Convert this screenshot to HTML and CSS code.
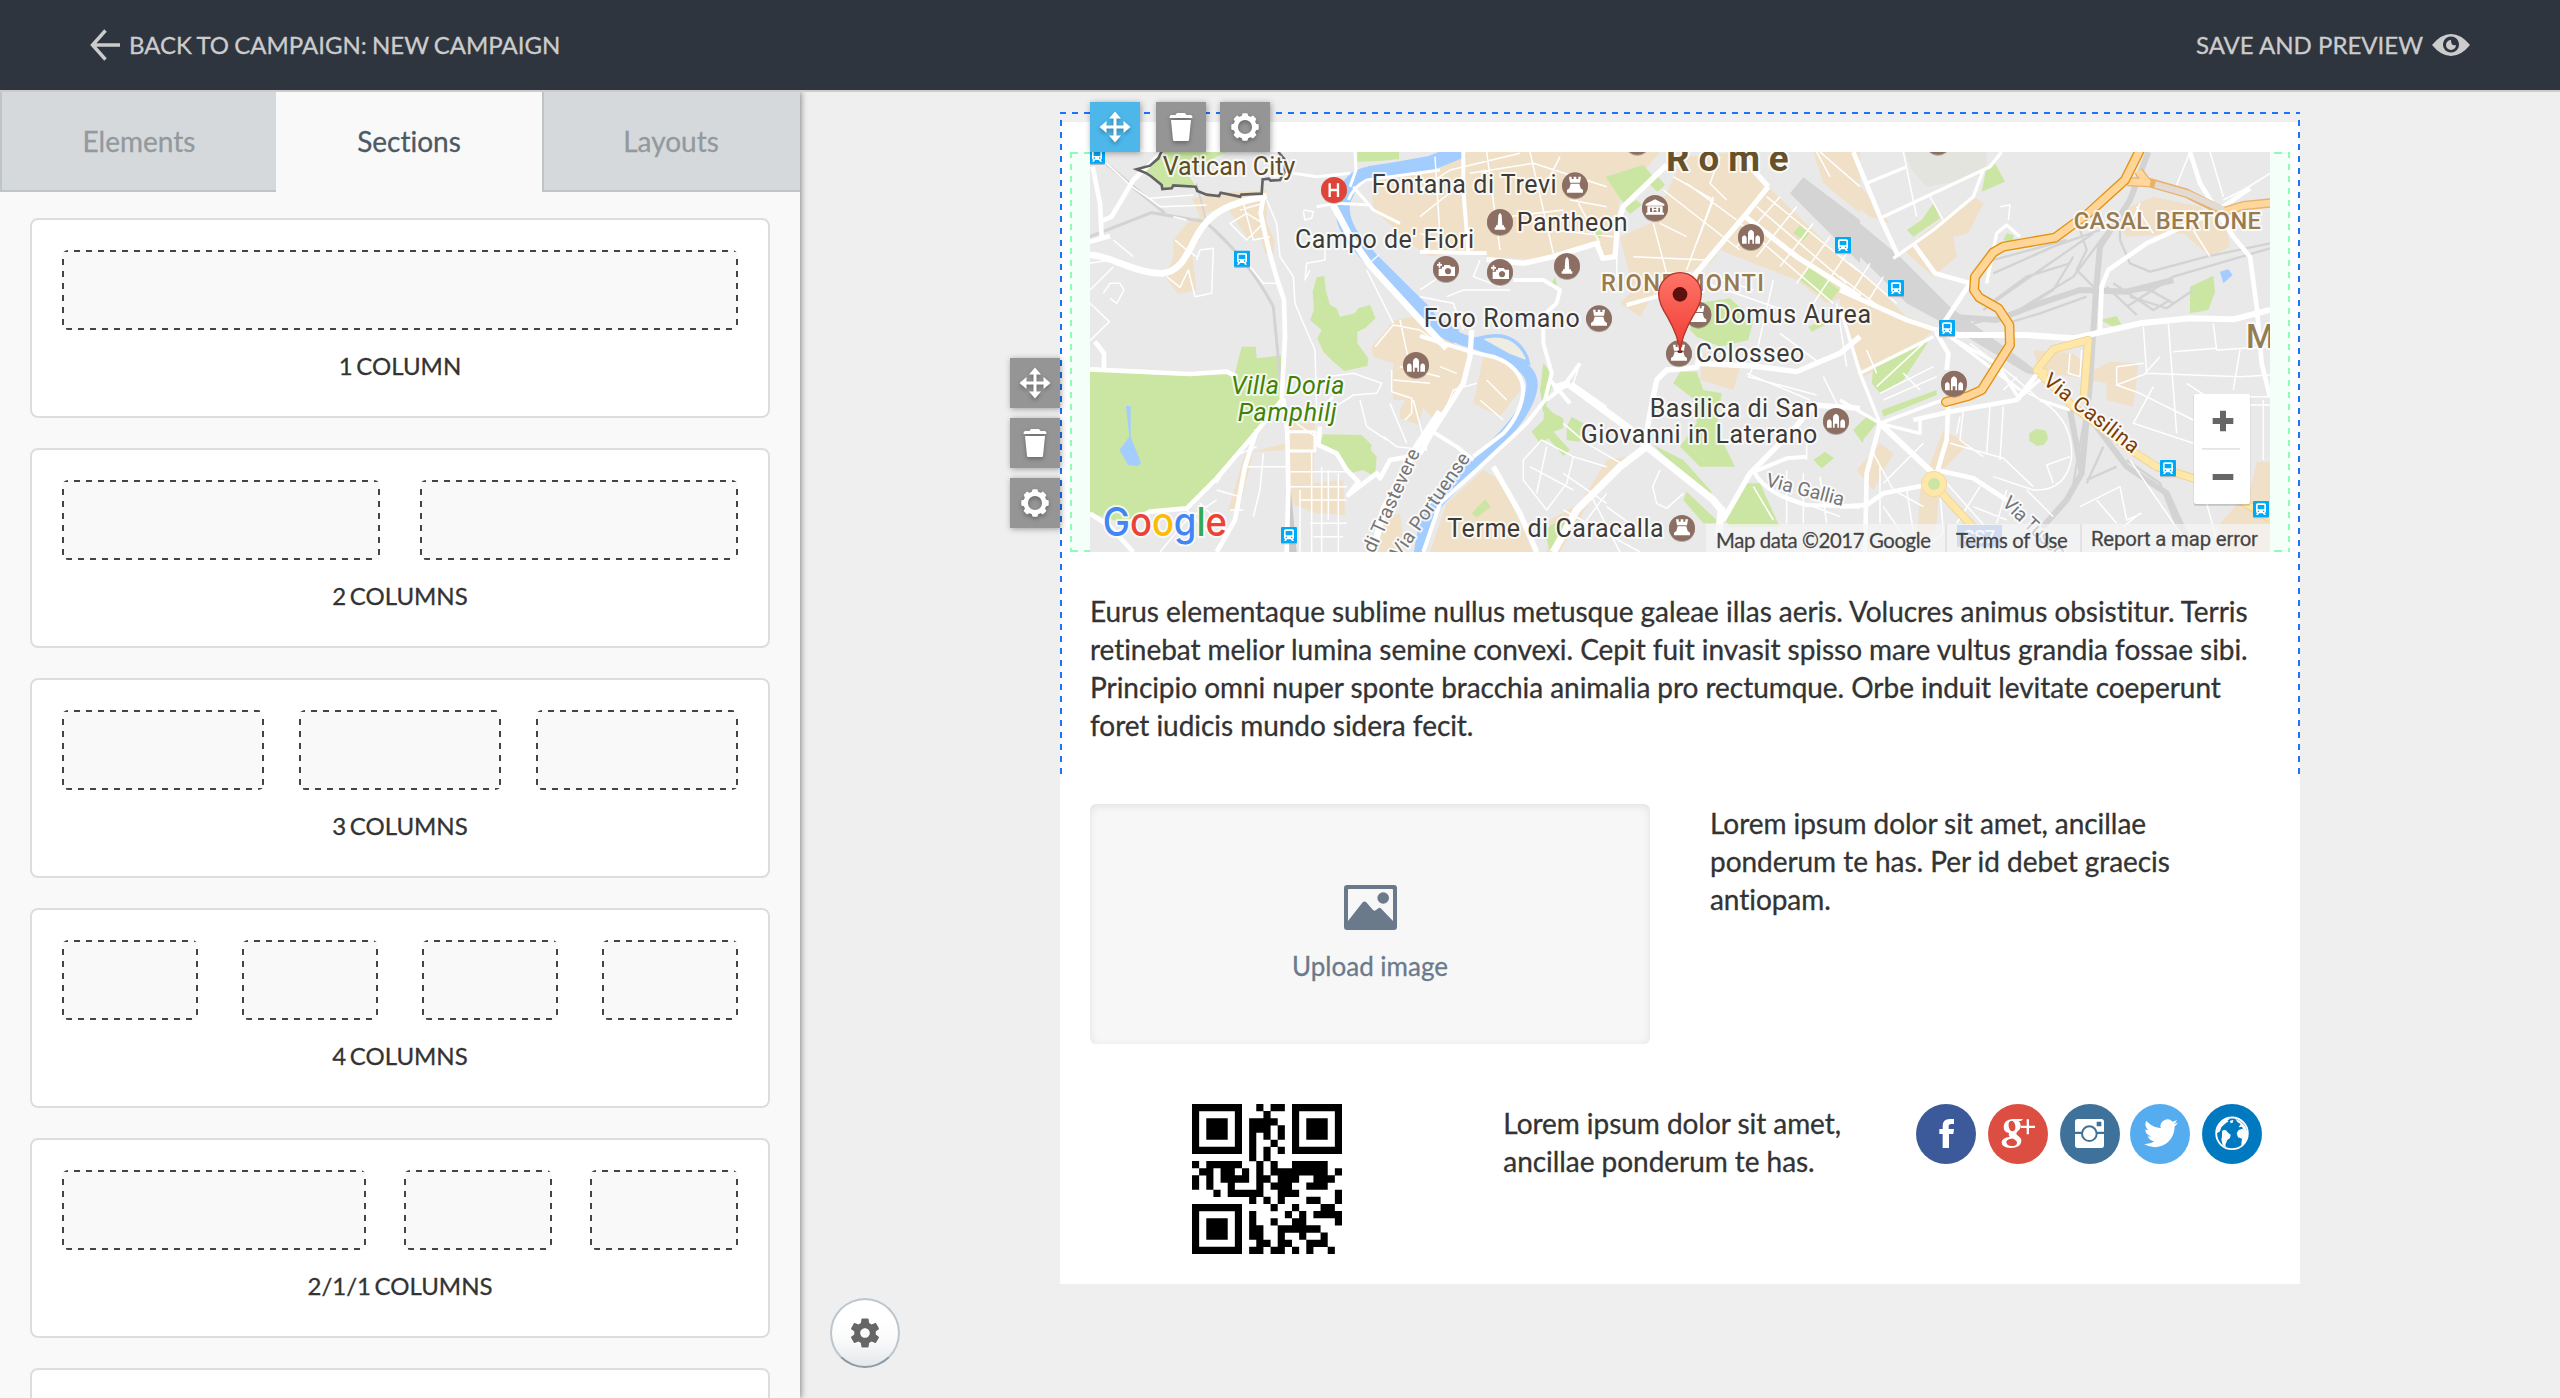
FILE: index.html
```html
<!DOCTYPE html>
<html lang="en">
<head>
<meta charset="utf-8">
<title>Campaign editor</title>
<link rel="stylesheet" href="styles.css">
</head>
<body>
<svg class="defs" width="0" height="0" aria-hidden="true">
  <defs>
    <symbol id="i-move" viewBox="0 0 32 32"><path d="M16 .5l6 7h-4.500v7h7V10l7 6-7 6v-4.500h-7v7H22l-6 7-6-7h4.500v-7h-7V22l-7-6 7-6v4.500h7v-7H10z"/></symbol>
    <symbol id="i-trash" viewBox="0 0 24 28"><path d="M8 0h8l1.500 2H22q1.500.5 1.500 3H.5Q.5 2.500 2 2h4.500zM2 7h20l-2 20q-.1 1-1.200 1H5.200Q4.100 28 4 27z"/></symbol>
    <symbol id="i-cog" viewBox="-14 -14 28 28">
      <circle r="9.300" fill="none" stroke="currentColor" stroke-width="4.400"/>
      <path d="M-3.400-10.500l1-3.200h4.800l1 3.200zM-3.400 10.500l1 3.200h4.800l1-3.200zM-10.500-3.400l-3.200 1v4.800l3.200 1zM10.500-3.400l3.200 1v4.800l-3.200 1z"/>
      <path transform="rotate(45)" d="M-3.400-10.500l1-3.200h4.800l1 3.200zM-3.400 10.500l1 3.200h4.800l1-3.200zM-10.500-3.400l-3.200 1v4.800l3.200 1zM10.500-3.400l3.200 1v4.800l-3.200 1z"/>
    </symbol>
    <symbol id="m-bus" viewBox="-24 -26 48 54" overflow="visible"><rect x="-24" y="-20" width="48" height="48" rx="3" fill="#8e9aa3" opacity=".6"/><rect x="-24" y="-24" width="48" height="48" rx="3" fill="#00a9f8"/><path fill="#fff" fill-rule="evenodd" d="M-10-17h20q5 0 5 5V8q0 4-4 4l4 6H9l-3-5H-6l-3 5h-6l4-6q-4 0-4-4v-20q0-5 5-5zm0 5V1h20v-13zM-10 5v4h4V5zM6 5v4h4V5z"/></symbol>
    <g id="m-poi"><circle cy="3" r="39" fill="#776a62" opacity=".5"/><circle r="39" fill="#8d6e63"/></g>
    <g id="m-tower"><use href="#m-poi"/><path fill="#fff" d="M-18-26h8v7h6v-7h8v7h6v-7h8l-3 18h-30zM-13-5h26l4 14 7 5v8h-48v-8l7-5z"/></g>
    <g id="m-obelisk"><use href="#m-poi"/><path fill="#fff" d="M0-28l5 8 2 30h5v6h4v7h-32v-7h4v-6h5l2-30z"/></g>
    <g id="m-camera"><use href="#m-poi"/><path fill="#fff" fill-rule="evenodd" d="M-22-20h5v5h5v5h-5v6h-5v-6h-5v-5h5zM-6-12h17l4 5h12v28h-49V-1h10v-6h6zM6-3a9.500 9.500 0 1 0 .1 0z"/></g>
    <g id="m-museum"><use href="#m-poi"/><path fill="#fff" fill-rule="evenodd" d="M0-26l28 14v5h-56v-5zM-23-5h46v19h4v6h-54v-6h4zm8 4v13h30V-1zM-9-1h5v4h8v-4h6v12H4V7h-8v4h-5z"/></g>
    <g id="m-ruin"><use href="#m-poi"/><path fill="#fff" d="M0-22q9 3 9 12v30H4V8h-8v12h-5v-30q0-9 9-12zM-20-5q7 2 7 8v17h-14V3q0-6 7-8zM20-5q7 2 7 8v17H13V3q0-6 7-8z"/></g>
    <linearGradient id="pinfill" x1="0" y1="0" x2="0" y2="1"><stop offset="0" stop-color="#ff7468"/><stop offset="1" stop-color="#ef3b32"/></linearGradient>
  </defs>
</svg>

<header class="topbar">
  <a class="topbar-link">
    <svg width="30" height="32" viewBox="0 0 30 32" fill="none" stroke="currentColor" stroke-width="3.400"><path d="M15.500 1.500L2.500 16l13 14.500M2 16h28"/></svg>
    <span>BACK TO CAMPAIGN: NEW CAMPAIGN</span>
  </a>
  <a class="topbar-link save">
    <span>SAVE AND PREVIEW</span>
    <svg width="38" height="24" viewBox="0 0 38 24"><path fill="currentColor" fill-rule="evenodd" d="M0 12Q9 1 19 1t19 11q-9 11-19 11T0 12zM19 3.500a8 8 0 1 0 .01 0z"/><path fill="currentColor" d="M19 7a5 5 0 1 0 5 5q-5 1.500-5-5z"/></svg>
  </a>
</header>

<div class="workspace">
  <aside class="sidebar">
    <nav class="tabs">
      <a class="tab tab-elements">Elements</a>
      <a class="tab tab-sections active">Sections</a>
      <a class="tab tab-layouts">Layouts</a>
    </nav>
    <div class="cards">
      <section class="card"><div class="slots"><i class="slot w1"></i></div><p>1 COLUMN</p></section>
      <section class="card"><div class="slots"><i class="slot w2"></i><i class="slot w2"></i></div><p>2 COLUMNS</p></section>
      <section class="card"><div class="slots"><i class="slot w3"></i><i class="slot w3"></i><i class="slot w3"></i></div><p>3 COLUMNS</p></section>
      <section class="card"><div class="slots"><i class="slot w4"></i><i class="slot w4"></i><i class="slot w4"></i><i class="slot w4"></i></div><p>4 COLUMNS</p></section>
      <section class="card"><div class="slots"><i class="slot w211"></i><i class="slot w112"></i><i class="slot w112"></i></div><p>2/1/1 COLUMNS</p></section>
      <section class="card"></section>
    </div>
  </aside>

  <main class="canvas">
    <article class="email">
      <section class="block selected">
        <div class="tools tools-top">
          <button class="tool primary"><svg width="32" height="32"><use href="#i-move"/></svg></button>
          <button class="tool tool-trash"><svg width="24" height="28"><use href="#i-trash"/></svg></button>
          <button class="tool"><svg width="28" height="28"><use href="#i-cog"/></svg></button>
        </div>
        <div class="tools tools-side">
          <button class="tool"><svg width="32" height="32"><use href="#i-move"/></svg></button>
          <button class="tool"><svg width="24" height="28"><use href="#i-trash"/></svg></button>
          <button class="tool"><svg width="28" height="28"><use href="#i-cog"/></svg></button>
        </div>
        <div class="map-frame">
          <svg class="map" width="1180" height="400" viewBox="0 0 1180 400">
            <rect width="1180" height="400" fill="#e9e9e9"/>

            <!-- built-up areas -->
            <g fill="#f0e0c8">
              <g transform="translate(-90 -62) scale(.33333)">
                <path d="M575 325L700 305 800 300V400L825 450 820 490H795L780 440 745 450 700 380 680 350 620 370 600 420V450L575 480 590 600 535 612 495 560 520 500V450L560 400 600 380z"/>
                <path d="M1185 690L1240 680 1320 740V1005L1270 950 1255 1005 1200 985V960L1215 930H1180L1175 880 1180 820 1120 800 1115 770z"/>
                <path d="M860 1000H945L940 1180 1030 1170 1035 1275 950 1270 870 1240V1080L760 1085 720 1250 685 1260 735 1090 860 1060zM1110 250L1320 260V480L1200 430 1120 360zM1150 1280L1200 1270 1215 1386H1130z"/>
              </g>
              <g transform="translate(330 -62) scale(.33333)">
                <path d="M-150 300L0 210 140 186H720L600 330 590 380V500L550 510 530 460 360 510 200 500 120 485 30 500-60 440z"/>
                <path d="M600 440L700 395 790 200 960 186 1050 290 980 370 870 520 720 580 660 680 600 640 640 600z"/>
                <path d="M760 200L1000 230 1045 290 1320 560V600L1220 640 1130 570 1000 520 900 480 980 370z"/>
                <path d="M0 700L150 790 130 900 50 1000 0 940zM190 800L300 830V900L240 980 160 940z"/>
                <path d="M850 790L960 830 940 900 840 870zM30 1386L80 1240 190 1140 240 1170 340 1386zM560 1110L620 1100 500 1250 420 1386H380L390 1290 480 1240zM1180 186H1320V370L1210 280z"/>
              </g>
              <g transform="translate(750 -62) scale(.33333)">
                <path d="M190 480L290 400 330 370 400 320 430 340 385 430 340 440 350 500 280 560zM0 500L100 580 200 680 290 710 240 760 150 820 70 860 0 640zM870 350L940 320 1080 350 1160 420 1170 470 1110 500 1030 430 860 440 830 400zM580 780L700 790 760 840 810 815 895 820 880 950 800 930V880L700 860 600 850zM310 1020L385 1060 300 1150 290 1300 230 1386 240 1200zM50 1140L120 1060 160 1090 100 1200zM1250 1115H1290V1386H1150L1140 1300 1230 1200zM0 220L40 260 150 400 90 380 0 310z"/>
              </g>
            </g>

            <!-- parks -->
            <g fill="#cbe6a3">
              <g transform="translate(-90 -62) scale(.33333)">
                <path d="M270 843L570 858 680 845 705 850 725 770H767L770 805 843 796V925H860L770 1020 700 1110 650 1165 560 1250 450 1265 370 1300 270 1268z"/>
                <path d="M487 186H680L640 205 560 250 585 285 490 295 450 250 415 238zM950 562L973 558 977 600 990 645 1010 655 1020 680 1065 670 1075 655 1110 645 1127 685 1095 715 1072 725V760L1105 805 1102 828 1033 843 1000 815 970 785 952 745 965 720 930 690 942 660 938 605z"/>
                <path d="M970 1033L1085 1035 1115 1065 1112 1080 1130 1100 1125 1160 1090 1140 1050 1150 1030 1110 1000 1080 960 1062zM1072 186H1197V207L1140 213 1072 215z"/>
              </g>
              <g transform="translate(330 -62) scale(.33333)">
                <path d="M557 260L670 225 700 260 610 340zM610 350L650 330 665 345 630 372zM685 280L710 255 735 285 712 305zM1120 430L1140 405 1168 430 1150 452zM1140 570L1170 530 1258 600 1230 635zM830 640L930 625 1000 690 985 750 900 770 830 740 810 720z"/>
                <path d="M760 880L780 845H830L850 900 905 910 890 1010 920 1080 945 1130 840 1130 780 1070 830 1000 825 930zM375 945L400 970 430 985V1015L400 1025 450 1080 430 1098 385 1045 360 1060 335 1025 370 990zM455 980L490 1000 480 1055 440 1050V1010zM370 820L395 850V890L370 970 360 900z"/>
                <path d="M700 1065L790 1110 875 1205 870 1215 780 1150zM800 1205L900 1300 850 1300 790 1230zM915 1290L980 1180H1020L1070 1290 1080 1310H930zM155 1270L195 1228 212 1250 170 1283zM370 1320L430 1285 440 1320 390 1380zM1180 1110L1215 1085 1242 1105 1205 1135zM390 590L405 560 415 600zM520 430L550 415 540 445zM1300 1020L1330 990V1060zM1165 710L1210 690 1215 705 1175 725z"/>
              </g>
              <g transform="translate(750 -62) scale(.33333)">
                <path d="M440 230L465 220 495 275 425 305zM245 390L280 340 300 385 220 440 200 420zM100 830L265 755 190 870 120 910 95 880zM125 960L290 900V915L130 980zM40 1020L85 975 110 1000 65 1055zM1050 590L1120 557 1125 605 1105 660 1050 670zM780 690L830 678 845 705 820 710zM490 450L500 430 520 435V460z"/>
                <path d="M567 1030L590 1016 618 1022 624 1045 612 1064 590 1068 568 1052z"/>
                <path fill="#e2e4dd" d="M195 186H440V230L370 270 260 290 215 240z"/>
                <path fill="#a3ccff" d="M1140 545L1165 538 1178 555 1150 580z"/>
              </g>
            </g>

            <!-- water -->
            <g transform="translate(-90 -62) scale(.33333)">
              <g fill="none" stroke="#a3ccff">
                <path stroke-width="44" d="M1390 180L1290 220 1190 238 1110 250Q1050 262 1040 310 1010 360 1050 430 1080 470 1115 510L1275 668Q1300 712 1370 740"/>
                <path stroke-width="34" d="M1270 665Q1300 715 1390 750 1470 770 1530 810 1600 840 1596 890 1590 950 1510 1038L1400 1148 1320 1230Q1265 1290 1258 1400"/>
              </g>
              <path fill="#a3ccff" d="M378 948H392V1040L423 1118 415 1128 385 1125 358 1080 388 1040z"/>
              <path fill="#efece1" stroke="#a3ccff" stroke-width="10" d="M1435 745Q1540 715 1580 800L1585 818 1525 795z"/>
              <path stroke="#fff" stroke-width="4" d="M1108 520L1136 495"/>
            </g>

            <!-- railways -->
            <g fill="none" stroke="#d3d3d3">
              <g transform="translate(-90 -62) scale(.33333)">
                <path stroke-width="9" d="M270 440L455 368 615 395Q740 500 820 650L845 910M320 222L495 370M395 290L490 365"/>
                <path stroke-width="5" d="M590 280L620 400 720 500"/>
                <path fill="#c9c9c9" stroke="none" d="M872 1190L890 1386H858z"/>
              </g>
              <path fill="#d4d4d4" stroke="none" transform="translate(330 -62) scale(.33333)" d="M1110 310L1150 262 1320 390V520L1230 430z"/>
              <g transform="translate(750 -62) scale(.33333)">
                <path fill="#d4d4d4" stroke="none" d="M0 350L180 500 330 650 560 820 610 860 560 850 330 710 200 640 60 500 0 450z"/>
                <path stroke-width="18" d="M330 680L470 690 600 640 720 600 860 605 1000 570M925 186L870 330 780 470 768 600 750 880 725 1150M690 960L725 1150 680 1230 600 1320M740 970L860 1130 980 1210 1060 1386"/>
                <path stroke-width="7" d="M1290 460L1100 500 930 545 870 520 840 450V370M1290 475L1000 560 860 650M820 400L700 560 520 670 400 700M780 420L640 470 460 550M760 430L600 540 500 610 430 660M720 420L740 480 710 540 760 590M460 510L680 450M700 500L640 600 560 650M800 600L930 600 1000 640M820 580L940 660 990 630M800 590L890 675M870 620L980 655 1060 600M500 700L600 670 740 620M740 950L700 1180M790 1070L740 1180M830 1130L740 1170M860 1110L960 1180 1040 1386M450 640L560 560 690 520"/>
              </g>
            </g>

            <!-- streets -->
            <g fill="none" stroke="#fff" stroke-linejoin="round">
              <g transform="translate(-90 -62) scale(.33333)">
                <path stroke-width="20" d="M270 495C330 495 400 550 490 550 550 540 565 480 595 430 630 370 680 340 800 318M1320 965L1250 1070 1150 1260 1120 1386M1000 345L1050 440 1110 525 1270 700 1340 775"/>
                <path stroke-width="14" d="M278 230L300 340 305 445M270 455L330 438M300 395L335 380 400 270 487 186M790 320L782 370C800 460 820 540 852 630L855 740 845 925M270 838L570 852 680 845 710 860M850 925L770 1025 650 1165 560 1255 450 1265 370 1305M850 925L862 1030 865 1200 860 1386M270 1270L330 1310 400 1386M770 1020L735 1130 705 1290 650 1386M285 755L312 790V838M960 1010L955 1065 1010 1090 1040 1140 1075 1175 1045 1215 1130 1150 1140 1165 1170 1110 1230 1100"/>
                <path stroke-width="9" d="M860 1025H945V1083H865M880 250L950 260 1050 250M950 350L1010 340 1110 345M1065 186L1068 240 1050 290M1060 290L1120 360 1200 400M945 1000L960 960 1000 920M820 260L860 250M1045 330Q1060 290 1100 270L1320 240"/>
                <path stroke-width="4.500" d="M800 330L830 400 840 500 880 560 885 640 910 700 945 780 950 960M975 460V510L920 520 915 570 930 540M270 640L328 695 270 752M310 610L330 580 360 580 372 600 350 640 330 625M590 510L600 480 640 475 635 610 585 620 565 540 540 592 500 560M690 400L740 370 790 400 740 450zM730 340L760 450 810 440M720 360L790 340M1125 770L1180 705 1260 720 1320 765M1175 840V905L1235 925V970L1215 990M1180 870L1290 880M980 860L1060 850 1145 880 1130 910 1060 915 960 980M870 1145H1050M870 1190H1040M900 1230H1040M985 1140V1290M965 1130V1386M1015 1150V1386M935 1085V1386M900 1200V1386M930 1300H1040M940 1340H1030M650 1180L700 1100 770 1070M650 1200L720 1220M690 1260H730M740 1130H860M790 1090L780 1200 760 1280M560 1260L640 1340M600 1240L680 1320M480 1386L560 1290 650 1230M320 220L395 290 440 320 480 350 620 345M450 325L580 315M910 360L940 365 935 385 915 390 910 365M520 380L560 390M525 450L560 480M270 520L330 510M270 600L340 530M340 450L400 500M1100 540L1130 600 1180 700M1200 830L1320 860M1200 690L1230 830M1240 930L1280 1080 1190 1070 1150 1040M1080 930L1100 1010 1160 1050M590 500L560 480M890 1000L960 1050M830 580L790 580 750 530M1260 600L1320 560M1170 940L1220 1060"/>
              </g>
              <g transform="translate(330 -62) scale(.33333)">
                <path stroke-width="22" d="M400 895L450 880M450 885L640 1025 680 1070 880 1230 920 1280M680 1070L600 1130 470 1260 400 1386M895 1340L905 1250"/>
                <path stroke-width="16" d="M740 225L610 350 593 400 585 500 548 505 530 460 400 500 310 520 200 508M1045 290L980 370 820 560M970 375L1130 500 1320 620M960 186L1000 240 1045 290M155 720L150 800 130 880 40 1020 0 1090M220 1130L300 1270 350 1386M675 1055L690 970 710 870 740 840 830 832 840 790M830 820L1000 828 1130 845 1260 790 1320 740M910 1290L990 1150 1120 1020 1180 945 1320 955"/>
                <path stroke-width="12" d="M0 738L150 785 220 800Q305 830 310 900 305 970 250 1030L160 1100M130 186L130 300 145 490M370 700V760L395 850 375 930 320 1000 170 1140 60 1240 10 1386M280 570L370 570 420 600 410 640 365 680M620 645L745 610M480 820L430 890 380 930M990 1150L1100 1105 1160 1100M1000 1140Q1030 1210 1160 1245L1320 1250M30 1020L110 1070 160 1110M390 870L450 940M0 485L200 490"/>
                <path stroke-width="4.500" d="M0 300L90 240 300 190M150 250L340 220 560 290M200 186L240 480M330 186L400 490M45 200L60 440M0 380L100 300M580 440L400 420M450 330L560 350M420 200L380 280M0 430L110 470M470 330L540 460M260 380L430 360M600 380L520 400M1010 350L1280 580M1080 320L950 470M1130 350L1010 500M1180 400L1080 530M1230 440L1130 580M1280 490L1180 640M1040 320L1310 540M960 400L1240 640M880 320L800 540M700 400L745 570M640 500L860 510M800 280L950 390M730 300L960 480M760 260L880 330 830 460M590 500L590 560M310 1110L365 1050 460 1100 440 1180 380 1260 310 1170zM330 1130L460 1200M380 1070L350 1210M460 1100L560 1130M430 1150L560 1240M510 1210L600 1386M560 1250L670 1330M470 1330L560 1210M430 1260L660 1386M980 850L1170 930M1000 830L985 860 1190 915M1210 860L1260 960M1160 1060V1110M1100 1140V1300M1150 1150V1300M1200 1160L1220 1300M1050 1200L1260 1280M430 1000L500 1060 620 1130M720 1140L698 1190 710 1240 740 1255 790 1210M1000 1190L1060 1290M1060 570L1000 830M1250 640L1280 830M1080 730L1200 820M900 200L870 280 920 330M1200 186L1320 290M480 820L460 880 560 950M60 830L110 850M60 1000L100 900 170 880M200 870L260 930M180 930L250 990M0 620L100 640 130 720M80 620L130 600 270 600M180 510L160 560 240 590M720 400L800 440M880 560L1000 600M860 580L1090 660M1190 186L1230 260"/>
              </g>
              <g transform="translate(750 -62) scale(.33333)">
                <path stroke-width="18" d="M320 735H560L700 745 900 700 1050 685 1180 688 1290 660M120 1000L290 1160"/>
                <path stroke-width="14" d="M0 600L200 690 320 730M40 186L120 380 175 500M220 460L285 550 390 580 330 670 290 730 325 790 320 840M120 1000L80 1150 75 1386M325 940L320 1050 290 1150M1050 186L1080 280 1180 440 1230 500 1250 650 1265 820 1290 920M780 720L785 590 805 540 920 460 1050 400 1150 350 1230 295M290 1140L400 1165 500 1230M260 1185L130 1210 80 1245 0 1250M600 840L530 930 330 965 220 990"/>
                <path stroke-width="10" d="M120 385L450 230 485 186M160 505L280 420 400 320 430 240M80 280L200 230M0 650L60 850 120 1000M120 1000L320 925M0 930L120 1000 240 1030V985M320 735L470 820 540 930M280 740L60 850M440 580L470 430 500 405 540 440M330 740L540 900M610 860L530 930M600 930L690 960"/>
                <path stroke-width="4.500" d="M910 710L920 850 830 885M985 700L1010 1030M1120 700L1130 780 1290 770M1000 785L1130 775M920 850L1200 860 1290 855M900 910L1060 990M940 890L880 1000 1060 1060M1200 780L1180 900M830 830L910 820M830 830V885L900 910M540 900Q700 960 695 1100 680 1205 580 1200L460 1160M450 950L440 1090M490 950L480 1110M370 960L360 1050 430 1100M330 1060L490 1105 580 1190M690 1100L620 1125 640 1180M720 1250L840 1190 860 1290 905 1270M770 1230L830 1300M870 1110L1060 1386M1220 920H1290M1220 945H1290M1270 930V1110M190 186L230 380M270 320L310 390M1000 310L1050 186M1150 330L1210 300 1290 250M1110 186L1150 320M900 340L870 410M940 430L890 350M0 560L130 660M30 520L170 640M90 520L40 600M130 560L80 640M120 910L280 830M130 930L290 860M110 890L250 760M80 780L110 850M190 850L240 900M360 980L350 1030M130 1180L250 1060M100 1090L160 1200 250 1250M200 1200L230 1386M300 1200L310 1330 240 1386M130 1250L220 1380M320 1180L480 1360M350 1300L420 1190M400 1250L500 1290M500 1200L470 1300M560 1200L640 1280M690 790L685 850 720 860 725 780M1040 880L1100 920M960 800L915 850M390 760L520 860 600 930M120 1130V1300M850 1310L900 1270M1100 1240L1140 1386M490 900L530 860M1060 420L1110 500M480 350L510 345 505 390"/>
              </g>
            </g>

            <!-- main roads -->
            <g transform="translate(750 -62) scale(.33333)" fill="none" stroke-linejoin="round">
              <g stroke="#ecd28f" stroke-width="25"><path d="M620 850L590 840 640 778 745 750 730 940"/><path d="M600 850L700 950 880 1085 950 1130 1060 1165 1200 1230 1290 1285M280 1182L430 1345"/></g>
              <g stroke="#ffe7a9" stroke-width="20"><path d="M620 850L590 840 640 778 745 750 730 940"/><path d="M600 850L700 950 880 1085 950 1130 1060 1165 1200 1230 1290 1285M280 1182L430 1345"/></g>
              <circle cx="282" cy="1182" r="28" fill="#cbe6a3" stroke="#ffe7a9" stroke-width="20"/>
              <circle cx="282" cy="1182" r="38" stroke="#ecd28f" stroke-width="2"/>
              <path stroke="#e8b269" stroke-width="28" d="M862 275L930 278 1040 310 1150 365 1210 347 1300 338M895 243L925 282"/>
              <path stroke="#ffd69c" stroke-width="20" d="M862 275L930 278M1150 365L1210 347 1300 338M895 243L925 282"/>
              <path stroke="#e2dad3" stroke-width="20" d="M945 283L1040 310 1150 360"/>
              <path stroke="#e3920f" stroke-width="30" stroke-linecap="round" d="M905 170L855 270 745 370 645 443 490 470 460 487 405 560 402 600 418 623 475 655 508 705 510 765 425 900 385 918 318 936"/>
              <path stroke="#ffd598" stroke-width="22" stroke-linecap="round" d="M905 170L855 270 745 370 645 443 490 470 460 487 405 560 402 600 418 623 475 655 508 705 510 765 425 900 385 918 318 936"/>
            </g>

            <path transform="translate(-90 -62) scale(.33333)" fill="none" stroke="#636363" stroke-width="8" d="M487 180L475 205 450 227 410 238 440 250 452 258 485 285 487 297 515 295 520 286 587 290 592 303 620 314 657 318 662 308 720 320 724 314 785 311 788 268 806 266 812 272 840 270 855 245V210L835 186"/>

            <!-- labels and markers, west -->
            <g class="labels" transform="translate(-90 -62) scale(.33333)">
              <use href="#m-ruin" x="1248" y="825"/>
              <g transform="translate(291 197)"><use href="#m-bus" x="-24" y="-26" width="48" height="54"/></g>
              <g transform="translate(726 506)"><use href="#m-bus" x="-24" y="-26" width="48" height="54"/></g>
              <g transform="translate(867 1335)"><use href="#m-bus" x="-24" y="-26" width="48" height="54"/></g>
              <circle cx="1002" cy="303" r="39" fill="#999" opacity=".5"/><circle cx="1002" cy="300" r="39" fill="#e04338"/>
              <path stroke="#fff" stroke-width="7" fill="none" d="M989 280v41M1014 280v41M989 300h25"/>
              <text class="city" x="488" y="254" textLength="398">Vatican City</text>
              <text x="1115" y="310" textLength="555">Fontana di Trevi</text>
              <text x="885" y="473" textLength="537">Campo de' Fiori</text>
              <text class="park" x="693" y="913" textLength="340">Villa Doria</text>
              <text class="park" x="713" y="993" textLength="297">Pamphilj</text>
              <text class="street" transform="translate(1122 1392) rotate(-65.500)" textLength="335">di Trastevere</text>
              <text class="street" transform="translate(1200 1408) rotate(-55)" textLength="370">Via Portuense</text>
              <text class="logo" x="308" y="1338" textLength="373" lengthAdjust="spacingAndGlyphs"><tspan fill="#4285f4">G</tspan><tspan fill="#ea4335">o</tspan><tspan fill="#fbbc05">o</tspan><tspan fill="#4285f4">g</tspan><tspan fill="#34a853">l</tspan><tspan fill="#ea4335">e</tspan></text>
            </g>

            <!-- centre -->
            <g class="labels" transform="translate(330 -62) scale(.33333)">
              <use href="#m-poi" x="652" y="155"/>
              <use href="#m-tower" x="465" y="286"/><use href="#m-tower" x="537" y="685"/><use href="#m-tower" x="835" y="674"/><use href="#m-tower" x="777" y="790"/><use href="#m-tower" x="786" y="1314"/>
              <use href="#m-obelisk" x="240" y="396"/><use href="#m-obelisk" x="441" y="528"/>
              <use href="#m-camera" x="78" y="537"/><use href="#m-camera" x="240" y="546"/>
              <use href="#m-museum" x="705" y="354"/>
              <use href="#m-ruin" x="993" y="441"/><use href="#m-ruin" x="1248" y="993"/>
              <text x="290" y="422" textLength="333">Pantheon</text>
              <text x="11" y="710" textLength="468">Foro Romano</text>
              <text x="883" y="698" textLength="470">Domus Aurea</text>
              <text x="827" y="815" textLength="326">Colosseo</text>
              <text x="689" y="980" textLength="507">Basilica di San</text>
              <text x="482" y="1058" textLength="710">Giovanni in Laterano</text>
              <text x="82" y="1340" textLength="649">Terme di Caracalla</text>
              <text class="area" x="543" y="603" textLength="489">RIONE MONTI</text>
              <text class="rome" x="738" y="242" textLength="368">Rome</text>
              <text class="street" transform="translate(1035 1188) rotate(14.500)" textLength="240">Via Gallia</text>
              <ellipse cx="780" cy="785" rx="8" ry="4" fill="#5c1a14"/>
              <path fill="url(#pinfill)" stroke="#b3352b" stroke-width="4" d="M780 785Q776 740 742 680 716 640 716 612A64 64 0 0 1 844 612Q844 640 818 680 784 740 780 785z"/>
              <circle cx="780" cy="613" r="22" fill="#5d100c"/>
            </g>

            <!-- east -->
            <g class="labels" transform="translate(750 -62) scale(.33333)">
              <use href="#m-poi" x="294" y="155"/>
              <use href="#m-ruin" x="342" y="881"/>
              <g transform="translate(9 465)"><use href="#m-bus" x="-24" y="-26" width="48" height="54"/></g>
              <g transform="translate(168 594)"><use href="#m-bus" x="-24" y="-26" width="48" height="54"/></g>
              <g transform="translate(321 714)"><use href="#m-bus" x="-24" y="-26" width="48" height="54"/></g>
              <g transform="translate(984 1134)"><use href="#m-bus" x="-24" y="-26" width="48" height="54"/></g>
              <g transform="translate(1263 1257)"><use href="#m-bus" x="-24" y="-26" width="48" height="54"/></g>
              <text class="area" x="701" y="417" textLength="562">CASAL BERTONE</text>
              <text class="quarter" x="1218" y="773">M</text>
              <text class="road" transform="translate(606 880) rotate(38)" textLength="345">Via Casilina</text>
              <text class="street" transform="translate(484 1243) rotate(44)" textLength="240">Via Tusco</text>
              <rect x="351" y="1305" width="135" height="65" fill="#7ba4e6"/>
              <text class="shield" x="370" y="1358" textLength="96">SS7</text>
              <path fill="#f5f5f5" fill-opacity=".7" d="M-402 1302H1290V1386H-402z"/>
              <path fill="#dcdcdc" d="M316 1302h4v84h-4zM721 1302h4v84h-4z"/>
              <g class="legal">
                <text x="-372" y="1373" textLength="645">Map data ©2017 Google</text>
                <text x="348" y="1373" textLength="335">Terms of Use</text>
                <text class="report" x="753" y="1368" textLength="501">Report a map error</text>
              </g>
              <rect x="1062" y="918" width="168" height="330" rx="6" fill="#000" opacity=".1"/>
              <rect x="1060" y="914" width="172" height="332" rx="8" fill="#000" opacity=".07"/>
              <rect x="1062" y="912" width="168" height="330" rx="6" fill="#fff"/>
              <path fill="#666" d="M1118 984h22v-22h18v22h22v18h-22v22h-18v-22h-22zM1118 1152h62v18h-62z"/>
              <path fill="#e4e4e4" d="M1086 1074h114v5h-114z"/>
            </g>
          </svg>
        </div>
        <p class="copy">Eurus elementaque sublime nullus metusque galeae illas aeris. Volucres animus obsistitur. Terris retinebat melior lumina semine convexi. Cepit fuit invasit spisso mare vultus grandia fossae sibi. Principio omni nuper sponte bracchia animalia pro rectumque. Orbe induit levitate coeperunt foret iudicis mundo sidera fecit.</p>
      </section>

      <section class="block two-up">
        <div class="upload">
          <svg width="53" height="45" viewBox="0 0 53 45" fill="#6b7a8b"><path fill-rule="evenodd" d="M3 0h47q3 0 3 3v39q0 3-3 3H3q-3 0-3-3V3q0-3 3-3zM4 5v31L18.500 17.500q2-2 4 0L29 25q1.500 1.500 3 0l2-1.500q1.500-1.500 3 0L49 36V5q0-1-1-1H5Q4 4 4 5z"/><circle cx="39.200" cy="13" r="5.800"/></svg>
          <span>Upload image</span>
        </div>
        <p class="copy narrow">Lorem ipsum dolor sit amet, ancillae ponderum te has. Per id debet graecis antiopam.</p>
      </section>

      <section class="block three-up">
        <svg class="qr" width="150" height="150" viewBox="0 0 21 21">
          <path fill="#000" fill-rule="evenodd" d="M0 0h7v7H0zM1 1v5h5V1zM2 2h3v3H2zM14 0h7v7h-7zM15 1v5h5V1zM16 2h3v3h-3zM0 14h7v7H0zM1 15v5h5v-5zM2 16h3v3H2z"/>
          <path stroke="#000" stroke-width="1.020" d="M9 .5h1M11 .5h2M10 1.500h1M8 2.500h4M8 3.500h3M12 3.500h1M8 4.500h1M10 4.500h1M12 4.500h1M8 5.500h1M11 5.500h1M8 6.500h1M10 6.500h1M12 6.500h1M8 7.500h1M10 7.500h1M0 8.500h1M2 8.500h5M9 8.500h1M11 8.500h1M14 8.500h5M1 9.500h2M4 9.500h2M7 9.500h1M9 9.500h1M11 9.500h8M20 9.500h1M0 10.500h1M2 10.500h1M4 10.500h4M9 10.500h2M12 10.500h3M17 10.500h3M0 11.500h1M2 11.500h1M5 11.500h1M9 11.500h1M11 11.500h3M16 11.500h3M3 12.500h1M5 12.500h5M12 12.500h3M20 12.500h1M8 13.500h1M10 13.500h1M12 13.500h1M16 13.500h2M20 13.500h1M11 14.500h1M14 14.500h1M18 14.500h2M8 15.500h1M13 15.500h1M15 15.500h1M17 15.500h4M8 16.500h1M11 16.500h1M14 16.500h2M20 16.500h1M8 17.500h2M12 17.500h6M8 18.500h2M12 18.500h1M15 18.500h1M18 18.500h1M9 19.500h2M12 19.500h2M16 19.500h3M8 20.500h2M11 20.500h2M14 20.500h1M16 20.500h1M19 20.500h1"/>
        </svg>
        <p class="copy">Lorem ipsum dolor sit amet, ancillae ponderum te has.</p>
        <div class="social">
          <svg viewBox="0 0 180 180"><circle cx="90" cy="90" r="90" fill="#3c5a99"/><path fill="#fff" d="M80 132V90H70V75H80V66Q80 45 101 45H114V60H106Q98 60 98 67V75H114L112 90H99V132z"/></svg>
          <svg viewBox="0 0 180 180"><circle cx="90" cy="90" r="90" fill="#dc4e41"/><path fill="#fff" fill-rule="evenodd" d="M74 45H106L99 51H92Q98 56 98 65 98 75 90 81 84 86 85 90 86 93 92 97 100 103 100 112 99 132 68 132 41 131 41 115 42 101 65 99 60 94 63 87 46 85 47 66 49 47 74 45zM71 50Q60 51 62 66 64 82 74 82 84 81 82 66 80 51 71 50zM69 104Q55 106 55 115 56 126 71 126 87 126 87 116 87 110 76 104 73 103 69 104z"/><path fill="#fff" d="M116 46h7v19h18v7h-18v19h-7V72H98v-7h18z"/></svg>
          <svg viewBox="0 0 180 180"><circle cx="90" cy="90" r="90" fill="#3f729b"/><rect x="45" y="45" width="87" height="87" rx="8" fill="#fff"/><path fill="#3f729b" d="M45 83h87v7H45zM110 53h14v14h-14z"/><circle cx="88" cy="89" r="22" fill="#fff" stroke="#3f729b" stroke-width="6"/></svg>
          <svg class="tw" viewBox="0 0 180 180"><circle cx="90" cy="90" r="90" fill="#55acee"/><path fill="#fff" transform="translate(42 37) scale(4.250)" d="M23.953 4.570a10 10 0 01-2.825.775 4.958 4.958 0 002.163-2.723c-.951.555-2.005.959-3.127 1.184a4.920 4.920 0 00-8.384 4.482C7.690 8.095 4.067 6.130 1.640 3.162a4.822 4.822 0 00-.666 2.475c0 1.710.870 3.213 2.188 4.096a4.904 4.904 0 01-2.228-.616v.060a4.923 4.923 0 003.946 4.827 4.996 4.996 0 01-2.212.085 4.936 4.936 0 004.604 3.417 9.867 9.867 0 01-6.102 2.105c-.390 0-.779-.023-1.170-.067a13.995 13.995 0 007.557 2.209c9.053 0 13.998-7.496 13.998-13.985 0-.210 0-.420-.015-.630A9.935 9.935 0 0024 4.590z"/></svg>
          <svg viewBox="0 0 180 180"><circle cx="90" cy="90" r="90" fill="#0079c1"/><circle cx="90" cy="88" r="47.500" fill="none" stroke="#fff" stroke-width="5.500"/><path fill="#fff" d="M45 88Q44 58 72 45L84 44 76 50 80 52 72 57 66 62 58 70 54 82zM60 81Q66 76 72 79L78 86 86 92 84 102 76 108 70 122 72 130 62 124 58 106 60 98zM84 50L94 48 92 56 86 58zM100 44Q122 52 132 72L138 92Q134 112 120 128L118 120 120 104 108 100 104 88 110 78 122 74 126 80 120 68 110 70 116 60 106 54z"/></svg>
        </div>
      </section>
    </article>
    <button class="fab"><svg width="36" height="36" viewBox="0 0 24 24"><path fill="#666" d="M19.140 12.940c.040-.300.060-.610.060-.940 0-.320-.020-.640-.070-.940l2.030-1.580c.180-.140.230-.410.120-.610l-1.920-3.320c-.120-.220-.370-.290-.590-.220l-2.390.960c-.500-.380-1.030-.700-1.620-.940l-.360-2.540c-.040-.240-.240-.410-.480-.410h-3.840c-.240 0-.430.170-.470.410l-.360 2.540c-.590.240-1.130.570-1.620.940l-2.390-.960c-.220-.080-.470 0-.590.220L2.740 8.870c-.120.210-.080.470.120.610l2.030 1.580c-.050.300-.090.630-.090.940s.020.640.070.940l-2.030 1.580c-.180.140-.230.410-.120.610l1.920 3.320c.120.220.370.290.590.220l2.390-.960c.500.380 1.030.700 1.620.940l.360 2.540c.050.240.240.410.480.410h3.840c.240 0 .440-.170.470-.410l.360-2.540c.590-.240 1.130-.560 1.620-.940l2.390.960c.220.080.470 0 .590-.220l1.920-3.320c.120-.220.070-.470-.120-.610l-2.010-1.580zM12 15.200c-1.760 0-3.200-1.440-3.200-3.200s1.440-3.200 3.200-3.200 3.200 1.440 3.200 3.200-1.440 3.200-3.200 3.200z"/></svg></button>
  </main>
</div>
</body>
</html>
```
FILE: styles.css
```css
* { box-sizing: border-box; }

html, body { height: 100%; }

body {
  margin: 0;
  overflow: hidden;
  display: flex;
  flex-direction: column;
  background: #efefef;
  color: #333;
  font-family: Lato, "Liberation Sans", sans-serif;
  font-variant-ligatures: none;
}

p { margin: 0; }
button { border: 0; padding: 0; }
svg { display: block; flex: none; }
.defs { position: absolute; }

/* Top bar */
.topbar {
  flex: none;
  height: 92px;
  padding: 0 90px;
  display: flex;
  align-items: center;
  justify-content: space-between;
  background: #2f353f;
  border-bottom: 2px solid #ccc;
  color: #ccc;
  font-size: 24px;
}
.topbar-link { display: flex; align-items: center; gap: 9px; }
.topbar-link span {
  line-height: 28px;
  margin-bottom: 1px;
  word-spacing: -1px;
  -webkit-text-stroke: .3px currentColor;
}
.save { gap: 9px; }
.save span { word-spacing: 0; }

.workspace { flex: 1; min-height: 0; display: flex; overflow: hidden; }

/* Sidebar */
.sidebar {
  flex: none;
  width: 800px;
  background: #f9f9f9;
  box-shadow: 1px 0 6px rgba(0, 0, 0, .45);
  clip-path: inset(0 -12px 0 0);
}
.tabs { display: flex; height: 100px; }
.tab {
  display: flex;
  align-items: center;
  justify-content: center;
  font-size: 28px;
  background: #d5d9dc;
  color: #93999c;
  border: solid #bfc4c7;
  border-width: 0 0 2px 2px;
  -webkit-text-stroke: .3px currentColor;
}
.tab-elements { width: 276px; }
.tab-sections { width: 266px; padding-right: 2px; }
.tab-layouts { width: 258px; padding-right: 2px; }
.tab.active { background: #f9f9f9; border-color: #f9f9f9; color: #4b5a64; }

.cards { display: flex; flex-direction: column; gap: 30px; padding: 26px 30px 0; }
.card {
  flex: none;
  height: 200px;
  padding: 30px;
  border: 2px solid #ddd;
  border-radius: 8px;
  background: #fff;
  text-align: center;
}
.card p {
  margin-top: 21px;
  font-size: 24px;
  line-height: 30px;
  word-spacing: -2.500px;
  -webkit-text-stroke: .3px currentColor;
}
.slots { display: flex; justify-content: space-between; }
.slot {
  --dash: #444 0 6px, transparent 6px 12px;
  height: 80px;
  border-radius: 6px;
  background:
    repeating-linear-gradient(90deg, var(--dash)) 0 0 / 100% 2px no-repeat,
    repeating-linear-gradient(90deg, var(--dash)) 4px 100% / 100% 2px no-repeat,
    repeating-linear-gradient(var(--dash)) 0 9px / 2px 100% no-repeat,
    repeating-linear-gradient(var(--dash)) 100% 9px / 2px 100% no-repeat,
    #f9f9f9;
}
.w1 { width: 676px; }
.w2 { width: 318px; }
.w3 { width: 202px; }
.w4 { width: 136px; }
.w211 { width: 304px; }
.w112 { width: 148px; }

/* Canvas */
.canvas { position: relative; flex: 1; padding: 30px 0 0 260px; }
.email { width: 1240px; background: #fff; }
.block { position: relative; padding: 30px; }
.selected::before {
  content: "";
  position: absolute;
  inset: -10px 0 0;
  pointer-events: none;
  background:
    repeating-linear-gradient(90deg, #1a73ff 0 6px, transparent 6px 12px) 0 0 / 100% 2px no-repeat,
    repeating-linear-gradient(#1a73ff 0 6px, transparent 6px 12px) 0 8px / 2px 100% no-repeat,
    repeating-linear-gradient(#1a73ff 0 6px, transparent 6px 12px) 100% 8px / 2px 100% no-repeat;
}

.tools { position: absolute; display: flex; z-index: 2; }
.tools-top { left: 30px; top: -20px; }
.tools-side { left: -50px; top: 236px; flex-direction: column; gap: 10px; }
.tool {
  width: 50px;
  height: 50px;
  display: flex;
  align-items: center;
  justify-content: center;
  background: #959595;
  color: #fff;
  box-shadow: 1px 1px 6px rgba(0, 0, 0, .35);
}
.tool svg { fill: currentColor; filter: drop-shadow(0 2px 2px rgba(0, 0, 0, .3)); overflow: visible; }
.tool.primary { background: #4db7ea; }
.tools-top .tool-trash { margin: 0 14px 0 16px; }

.map-frame {
  margin: 0 -20px;
  padding: 0 20px;
  background:
    repeating-linear-gradient(#8dfcb9 0 6px, transparent 6px 12px) 0 0 / 2px 100% no-repeat,
    repeating-linear-gradient(#8dfcb9 0 6px, transparent 6px 12px) 100% 0 / 2px 100% no-repeat,
    repeating-linear-gradient(90deg, #8dfcb9 0 8px, transparent 8px 14px) 0 0 / 100% 2px no-repeat,
    repeating-linear-gradient(90deg, #8dfcb9 0 8px, transparent 8px 14px) 0 100% / 100% 2px no-repeat,
    #f4fff9;
}
.selected .copy { margin-top: 40px; }

.copy {
  font-size: 28px;
  line-height: 38px;
  letter-spacing: -0.05px;
  -webkit-text-stroke: .3px currentColor;
}
.narrow { max-width: 500px; }

.two-up { display: grid; grid-template-columns: 1fr 1fr; gap: 60px; }
.upload {
  height: 240px;
  padding-top: 81px;
  display: flex;
  flex-direction: column;
  align-items: center;
  gap: 20px;
  border-radius: 6px;
  background: #f7f7f7;
  box-shadow: inset 0 2px 8px rgba(0, 0, 0, .09);
  color: #6b7a8b;
  font-size: 26px;
}
.upload span { -webkit-text-stroke: .3px currentColor; }

.three-up { display: grid; grid-template-columns: repeat(3, 1fr); gap: 60px; }
.qr { justify-self: center; }
.social { display: flex; gap: 12px; margin-left: -1px; }
.social svg { width: 60px; height: 60px; }
.social .tw { margin-left: -2px; }

.fab {
  position: absolute;
  left: 30px;
  top: 1206px;
  width: 70px;
  height: 70px;
  display: flex;
  align-items: center;
  justify-content: center;
  border-radius: 50%;
  border: 2px solid #bcc6ce;
  border-bottom-color: #8e9aa3;
  background: linear-gradient(#fff 30%, #fafafa 60%, #e4e8eb);
}
.fab svg { filter: drop-shadow(0 1px 0 #fff); }

/* Map lettering; sizes are in the map's 3x drawing units */
.labels text {
  font-family: Roboto, "Liberation Sans", sans-serif;
  font-size: 75px;
  fill: #3d3b38;
  stroke: #fff;
  stroke-opacity: .75;
  stroke-width: 12px;
  stroke-linejoin: round;
  paint-order: stroke;
}
.labels .city { fill: #5f4d25; }
.labels .park { fill: #3f8207; font-style: italic; }
.labels .area { fill: #9a7b50; font-size: 71px; font-weight: 500; }
.labels .rome { fill: #66512a; font-size: 110px; font-weight: 700; }
.labels .quarter { fill: #917e55; font-size: 98px; font-weight: 500; }
.labels .street { fill: #757575; font-size: 58px; }
.labels .road { fill: #7b3d0b; font-size: 64px; }
.labels .shield { fill: #fff; stroke: none; font-size: 56px; font-weight: 500; }
.labels .logo { font-family: Inter, Roboto, sans-serif; font-size: 118px; font-weight: 500; }
.labels .legal text { font-family: Lato, sans-serif; font-size: 61px; fill: #444; stroke: #444; stroke-width: 1px; }
.labels .legal .report { font-family: Roboto, sans-serif; font-size: 61px; }
```
